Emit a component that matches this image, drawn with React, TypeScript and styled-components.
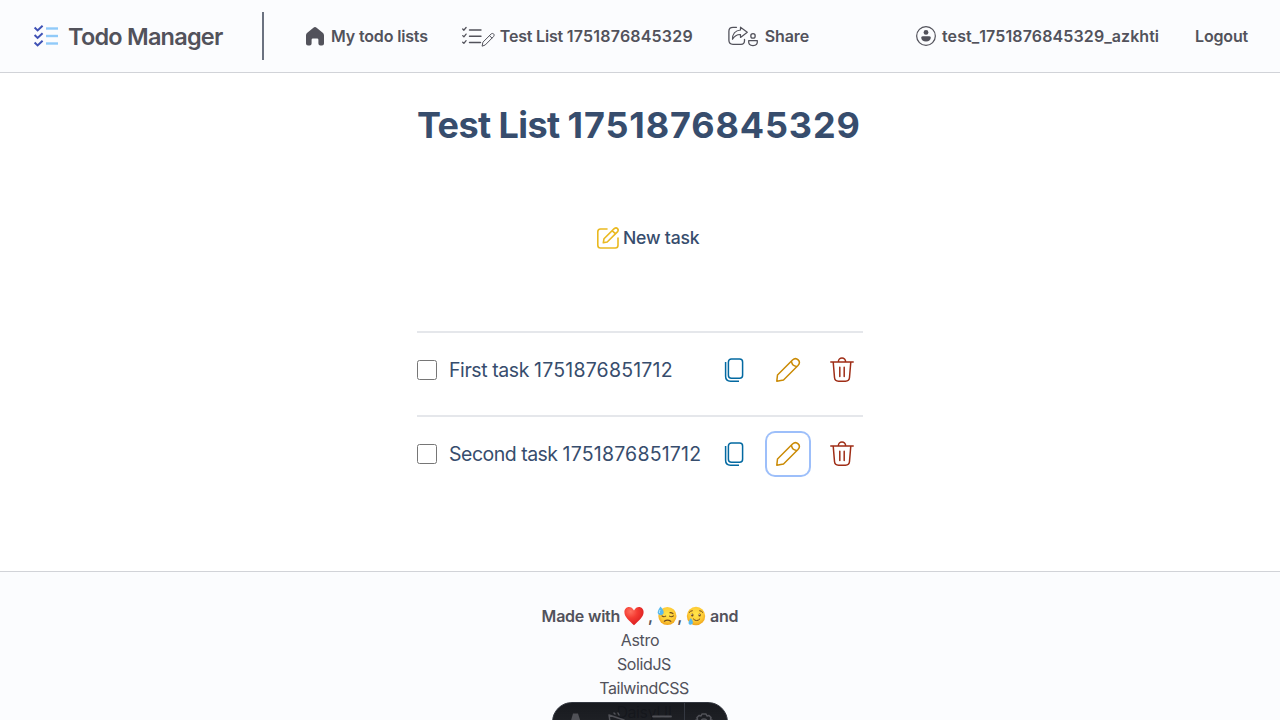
import React from "react";
import styled, { createGlobalStyle } from "styled-components";

const Global = createGlobalStyle`
  * { box-sizing: border-box; }
  html, body { margin: 0; height: 100%; overflow: hidden; background: #fff; }
  body {
    font-family: Inter, "Noto Sans", sans-serif;
    color: #52525b;
  }
  svg { display: block; flex: none; overflow: visible; }
`;

const Page = styled.div`
  height: 720px;
  overflow: hidden;
  display: flex;
  flex-direction: column;
`;

const Header = styled.header`
  flex: none;
  height: 73px;
  padding: 0 32px;
  display: flex;
  align-items: center;
  background: #fbfcfe;
  border-bottom: 1px solid #d1d3d8;
`;

const Label = styled.span<{ $track?: number }>`
  white-space: nowrap;
  letter-spacing: ${(p) => p.$track ?? 0}px;
`;

const Brand = styled.a`
  width: 230px;
  padding-left: 2px;
  display: flex;
  align-items: center;
  gap: 10px;
  font-size: 23.5px;
  line-height: 32px;
  font-weight: 600;

  ${Label} { padding-top: 2px; }
`;

const Divider = styled.div`
  width: 2px;
  height: 48px;
  background: #6b7280;
  margin-right: 42px;
`;

const NavItem = styled.a<{ $gap?: number; $after?: number }>`
  display: flex;
  align-items: center;
  gap: ${(p) => p.$gap ?? 6}px;
  margin-right: ${(p) => p.$after ?? 0}px;
  font-size: 16px;
  line-height: 24px;
  font-weight: 600;
`;

const Spacer = styled.div`
  flex: 1;
`;

const Main = styled.main`
  flex: none;
  width: 446px;
  height: 498px;
  margin: 0 auto;
  padding-top: 32px;
  color: #374d6d;
`;

const Title = styled.h1`
  margin: 0;
  font-size: 36px;
  line-height: 40px;
  font-weight: 700;
`;

const NewTask = styled.button`
  display: flex;
  align-items: center;
  gap: 4px;
  margin: 79px 0 79px 180px;
  padding: 0;
  height: 28px;
  border: 0;
  background: none;
  color: inherit;
  font: 500 17.6px/28px Inter, sans-serif;
`;

const List = styled.ul`
  list-style: none;
  margin: 0;
  padding: 0;
`;

const Task = styled.li`
  display: flex;
  height: 84px;
  padding: 16px 0 24px;
  border-top: 2px solid #e5e7eb;
  align-items: center;
  font-size: 19.5px;
  line-height: 28px;
`;

const Checkbox = styled.input`
  appearance: none;
  flex: none;
  width: 20px;
  height: 20px;
  margin: 0 12px 0 0;
  border: 1px solid #767676;
  border-radius: 2.5px;
  background: #fff;
`;

const Actions = styled.div`
  margin-left: auto;
  display: flex;
  gap: 12px;
`;

const ActionButton = styled.button<{ $color: string; $focused?: boolean }>`
  width: 42px;
  height: 42px;
  padding: 0;
  border: 0;
  border-radius: 8px;
  background: none;
  display: grid;
  place-items: center;
  color: ${(p) => p.$color};
  box-shadow: ${(p) => (p.$focused ? "0 0 0 2px #9dbffa" : "none")};
`;

const Footer = styled.footer`
  flex: none;
  height: 180px;
  padding-top: 32px;
  border-top: 1px solid #d1d3d8;
  background: #fbfcfe;
  display: flex;
  flex-direction: column;
  align-items: center;
  font-size: 16px;
  line-height: 24px;
`;

const MadeWith = styled.div`
  display: flex;
  align-items: center;
  height: 24px;
  font-weight: 600;
  white-space: pre;
`;

const Tech = styled.div<{ $indent?: boolean }>`
  padding-left: ${(p) => (p.$indent ? 8 : 0)}px;
`;

const Toolbar = styled.div`
  position: fixed;
  left: 552px;
  top: 702px;
  width: 176px;
  height: 40px;
  border: 1px solid #343841;
  border-radius: 20px;
  background: linear-gradient(180deg, rgba(19, 21, 26, 0.98), rgba(19, 21, 26, 0.92));
  overflow: hidden;
  display: flex;
  color: #505157;
`;

const Tool = styled.div<{ $last?: boolean }>`
  width: ${(p) => (p.$last ? 40 : 43.6)}px;
  height: 38px;
  display: grid;
  place-items: center;
  border-left: ${(p) => (p.$last ? "1px solid #343841" : "0")};
`;

const line = {
  fill: "none",
  stroke: "currentColor",
  strokeLinecap: "round" as const,
  strokeLinejoin: "round" as const,
};

const BrandIcon = () => (
  <svg width="24" height="24" viewBox="0 0 24 24" fill="none" strokeWidth="2">
    {[0.8, 8.3, 15.8].map((y) => (
      <g key={y} transform={`translate(0 ${y})`}>
        <path d="M.6 2.8 3.6 5.6 8.6 1" stroke="#3f51b5" />
        <path d="M12 3.7h12" stroke="#90caf9" strokeWidth="2.4" />
      </g>
    ))}
  </svg>
);

const HomeIcon = () => (
  <svg width="18" height="19" viewBox="0 0 18 19" fill="currentColor">
    <path d="M7.4.7a2.4 2.4 0 0 1 3.2 0l6.1 5.1c.8.7 1.3 1.6 1.3 2.7v7.9a2 2 0 0 1-2 2h-1.6a2 2 0 0 1-2-2v-3.7a1.3 1.3 0 0 0-1.3-1.3H6.9a1.3 1.3 0 0 0-1.3 1.3v3.7a2 2 0 0 1-2 2H2a2 2 0 0 1-2-2V8.5c0-1.1.5-2 1.3-2.7z" />
  </svg>
);

const ListEditIcon = () => (
  <svg width="33" height="20" viewBox="0 0 33 20" {...line} strokeWidth="1">
    {[2, 8.6, 15.2].map((y) => (
      <path key={y} d={`M.7 ${y + 1}l1.2 1.2 2.2-2.7`} strokeWidth="1.3" />
    ))}
    <path d="M7.5 4h11.5M7.5 10.2h11.5M7.5 16.5h11" strokeWidth="1.4" />
    <path transform="translate(0 .8)" d="m20.2 19 .7-3.6 8.2-8.2c1.9-1.5 4 .4 2.5 2.5l-8.1 8.2zM27.5 8.9l2.4 2.3" />
  </svg>
);

const ShareIcon = () => (
  <svg width="31" height="20" viewBox="0 0 31 20" {...line} strokeWidth="1.3">
    <path d="M8.5 1.3H5Q.9 1.3 .9 5.3v9q0 4 4.1 4h8q3.5 0 3.5-3.5V13.3" />
    <path d="M12.5 1.2 19.3 6.3 12.5 11.4V8.5C8.5 8.3 6.5 10 4.5 13.3 4.5 8.5 7 4.3 12.5 4z" strokeWidth="1.2" />
    <circle cx="25" cy="9.9" r="2.2" />
    <path d="M20.7 14.6h8.6q.6 5-4.3 5t-4.3-5z" />
  </svg>
);

const UserIcon = () => (
  <svg width="20" height="20" viewBox="0 0 20 20">
    <circle cx="10" cy="10" r="9.35" fill="none" stroke="currentColor" strokeWidth="1.2" />
    <circle cx="10" cy="6.4" r="2.4" fill="currentColor" />
    <path d="M6.6 10.3h6.8q1.5 0 1.4 1.5-.4 3.7-4.8 3.7t-4.8-3.7q-.1-1.5 1.4-1.5z" fill="currentColor" />
  </svg>
);

const NewTaskIcon = () => (
  <svg width="22" height="22" viewBox="0 0 22 22" {...line} stroke="#eab920" strokeWidth="1.6">
    <path d="M10 2H3.5Q.8 2 .8 4.7v13.6Q.8 21 3.5 21h14.8q2.700 0 2.700-2.700V11" />
    <path d="m6.3 15.8.7-4.1L17.2 1.6c2.6-1.9 5.2.8 3.2 3.3L10.2 15zM15.2 3.6l3.3 3.3" />
  </svg>
);

const CopyIcon = () => (
  <svg width="24" height="24" viewBox="0 0 24 24" {...line} strokeWidth="1.5" strokeLinecap="butt">
    <rect x="6.4" y=".9" width="14.2" height="19.4" rx="3" />
    <path d="M3.6 4v14.3q0 4.9 4.900 4.900H17" />
  </svg>
);

const PencilIcon = () => (
  <svg width="24" height="24" viewBox="0 0 24 24" {...line} strokeWidth="1.5">
    <path d="M.8 23.2 1.5 17 16.5 2c4-3.6 9.2 1.5 5.5 5.500L7.500 22zM15.500 3.300c.3 3 2.200 4.900 5.200 5.200" />
  </svg>
);

const TrashIcon = () => (
  <svg width="24" height="24" viewBox="0 0 24 24" {...line} strokeWidth="1.5">
    <path d="M.8 3.900h22.400M3.200 4l1.300 15.500q.3 3.700 4 3.700h7q3.700 0 4-3.700L20.800 4M8.400 3.600a3.600 3.600 0 0 1 7.200 0M9.800 9.300v9.200M14.200 9.300v9.200" />
  </svg>
);

const HeartEmoji = () => (
  <svg width="20" height="20" viewBox="0 0 20 20">
    <defs>
      <radialGradient id="heart" cx=".32" cy=".25" r=".8">
        <stop stopColor="#ff705f" /><stop offset=".45" stopColor="#f43b32" /><stop offset="1" stopColor="#d91c20" />
      </radialGradient>
    </defs>
    <path d="M10 4.500C8.800 1.800 6.800.9 5 .9 2.400.9.4 3 .4 6c0 5.400 5.200 8.700 9.600 13.300C14.400 14.700 19.600 11.400 19.600 6c0-3-2-5.100-4.600-5.100-1.800 0-3.800.9-5 3.600z" fill="url(#heart)" />
  </svg>
);

const SweatEmoji = () => (
  <svg width="20" height="20" viewBox="0 0 20 20">
    <defs>
      <radialGradient id="face" cx=".5" cy=".4" r=".6">
        <stop stopColor="#ffe64b" /><stop offset=".65" stopColor="#fecb35" /><stop offset="1" stopColor="#eda21d" />
      </radialGradient>
    </defs>
    <circle cx="10.4" cy="10" r="9.1" fill="url(#face)" />
    <g fill="none" stroke="#70491e" strokeWidth="1.1" strokeLinecap="round">
      <path d="M5 9.800q1.700 1.700 3.700.3M12.500 10.100q2 1.400 3.900-.3M7.300 15.300q3.300-2.400 6.500 0M13 6.600q1.800-.1 3 1" />
    </g>
    <path d="M3.500.4Q7.600 5 6.500 7.500C5.200 10 1.700 9.600.8 7.300Q.1 5.100 3.500.4z" fill="#59b9ed" />
    <path d="M3 4q-1 2-.4 3" fill="none" stroke="#b9e8ff" />
  </svg>
);

const TearEmoji = () => (
  <svg width="20" height="20" viewBox="0 0 20 20">
    <circle cx="10" cy="10" r="9.2" fill="url(#face)" />
    <g fill="#70491e">
      <ellipse cx="6.3" cy="9" rx="1.2" ry="1.5" />
      <ellipse cx="13.6" cy="9" rx="1.2" ry="1.5" />
    </g>
    <path d="M3.300 6.300q1.100-1.500 3-1.600M13.700 4.700q2 .2 3 1.600M7.400 13q3.200 3.400 6.400 0" fill="none" stroke="#70491e" strokeLinecap="round" />
    <circle cx="5.9" cy="8.4" r=".5" fill="#fff" /><circle cx="13.2" cy="8.4" r=".5" fill="#fff" />
    <path d="M4.900 12Q7.400 15.500 6.800 17.200c-.7 1.900-3.500 1.900-4.200.2q-.4-1.900 2.300-5.400z" fill="#58b9ee" />
  </svg>
);

type TaskRowProps = { name: string; id: string; track: number; focused?: boolean };

const TaskRow = ({ name, id, track, focused }: TaskRowProps) => (
  <Task>
    <Checkbox type="checkbox" aria-label={`${name} ${id}`} />
    <Label $track={track}>{name} <Label $track={0.2}>{id}</Label></Label>
    <Actions>
      <ActionButton $color="#0369a1" aria-label="Copy"><CopyIcon /></ActionButton>
      <ActionButton $color="#ca8a04" $focused={focused} aria-label="Edit"><PencilIcon /></ActionButton>
      <ActionButton $color="#9f2d16" aria-label="Delete"><TrashIcon /></ActionButton>
    </Actions>
  </Task>
);

export default function App() {
  return (
    <Page>
      <Global />
      <Header>
        <Brand><BrandIcon /><Label $track={-0.78}>Todo Manager</Label></Brand>
        <Divider />
        <NavItem $gap={7} $after={34}><HomeIcon /><Label $track={-0.15}>My todo lists</Label></NavItem>
        <NavItem $gap={5} $after={35}><ListEditIcon /><Label $track={-0.2}>Test List <Label $track={0.2}>1751876845329</Label></Label></NavItem>
        <NavItem><ShareIcon /><Label $track={-0.15}>Share</Label></NavItem>
        <Spacer />
        <NavItem $after={36}><UserIcon /><Label $track={0.05}>test_<Label $track={0.12}>1751876845329</Label>_azkhti</Label></NavItem>
        <NavItem><Label $track={-0.18}>Logout</Label></NavItem>
      </Header>
      <Main>
        <Title><Label $track={-0.6}>Test List <Label $track={0.87}>1751876845329</Label></Label></Title>
        <NewTask><NewTaskIcon /><Label $track={-0.2}>New task</Label></NewTask>
        <List>
          <TaskRow name="First task" id="1751876851712" track={-0.42} />
          <TaskRow name="Second task" id="1751876851712" track={-0.5} focused />
        </List>
      </Main>
      <Footer>
        <MadeWith>
          <Label $track={-0.22}>Made with&nbsp;</Label><HeartEmoji /><Label>&nbsp;,&nbsp;</Label><SweatEmoji /><Label>,&nbsp;</Label><TearEmoji /><Label $track={-0.22}>&nbsp;and</Label>
        </MadeWith>
        <Tech><Label $track={-0.3}>Astro</Label></Tech>
        <Tech $indent><Label $track={-0.4}>SolidJS</Label></Tech>
        <Tech $indent><Label $track={-0.42}>TailwindCSS</Label></Tech>
        <Tech $indent><Label $track={-0.4}>DaisyUI</Label></Tech>
      </Footer>
      <Toolbar>
        <Tool>
          <svg width="16" height="19" viewBox="0 0 16 19" fill="currentColor"><path d="M6 .5h5l4.500 14q-3-1.500-7-1.500t-6.500 1.500z" /></svg>
        </Tool>
        <Tool>
          <svg width="18" height="18" viewBox="0 0 18 18" {...line} strokeWidth="1.5"><path d="M2 15 0 2l15 5-7 3zM5 0l1 1M9 0l1 2" /></svg>
        </Tool>
        <Tool>
          <svg width="18" height="12" viewBox="0 0 18 12" {...line} strokeWidth="1.8"><path d="M0 .5h18M0 10h18" /></svg>
        </Tool>
        <Tool $last>
          <svg width="18" height="18" viewBox="0 0 18 18" {...line} strokeWidth="1.6"><path d="m7 1 4 0 1 2 2-.5 2 2-.5 2 2 1v3l-2 1 .5 2-2 2-2-.5-1 2H7l-1-2-2 .5-2-2 .5-2-2-1v-3l2-1-.5-2 2-2 2 .5z" /><circle cx="9" cy="9" r="3" /></svg>
        </Tool>
      </Toolbar>
    </Page>
  );
}
